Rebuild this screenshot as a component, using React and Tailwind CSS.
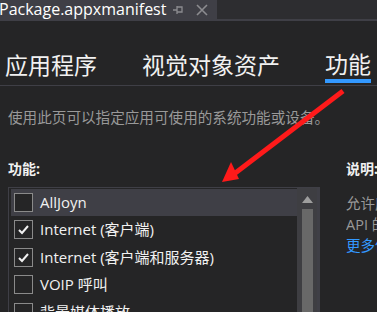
const items = [
  { label: "AllJoyn", checked: false, hover: true },
  { label: "Internet (客户端)", checked: true },
  { label: "Internet (客户端和服务器)", checked: true },
  { label: "VOIP 呼叫", checked: false },
  { label: "背景媒体播放", checked: false },
];

const font = { fontFamily: '"Open Sans", "Noto Sans CJK SC", sans-serif' };

function Check({ checked }) {
  return (
    <div className="w-[19px] h-[19px] shrink-0 border border-[#8a8a8a] bg-[#252526] flex items-center justify-center">
      {checked && (
        <svg width="13" height="13" viewBox="0 0 13 13">
          <path d="M2 7 L5 10 L11 3" fill="none" stroke="#f1f1f1" strokeWidth="2" />
        </svg>
      )}
    </div>
  );
}

export default function App() {
  return (
    <div className="w-[377px] h-[312px] overflow-hidden bg-[#252526] relative text-[#f1f1f1]" style={font}>
      {/* document tab strip */}
      <div className="h-[21px] flex bg-[#2d2d30] border-b-2 border-[#3f3f46]">
        <div className="w-[217px] bg-[#3f3f46] flex items-center">
          <span className="text-[16px] leading-none -ml-[1px] -mt-[2px] text-white">Package.appxmanifest</span>
          <svg className="ml-auto" width="12" height="10" viewBox="0 0 12 10">
            <path d="M1 5 H5 M5 1 V9 M5 2 H10 V7 H5" fill="none" stroke="#8c8c90" strokeWidth="1.3" />
          </svg>
          <svg className="ml-[12px] mr-[9px]" width="12" height="12" viewBox="0 0 12 12">
            <path d="M1 1 L11 11 M11 1 L1 11" stroke="#8c8c90" strokeWidth="1.6" />
          </svg>
        </div>
      </div>

      {/* main tabs */}
      <div className="flex items-end h-[65px] border-b border-[#3f3f46] pl-[5px]">
        <div className="text-[23px] leading-none pb-[8px]">应用程序</div>
        <div className="text-[23px] leading-none pb-[8px] ml-[45px]">视觉对象资产</div>
        <div className="ml-[45px] flex flex-col">
          <div className="text-[23px] leading-none pb-[3px]">功能</div>
          <div className="h-[4px] w-[46px] bg-[#3399ff] mb-[2px]" />
        </div>
      </div>

      <div className="pl-[8px] pt-[24px] text-[14.6px] leading-none text-[#999999]">
        使用此页可以指定应用可使用的系统功能或设备。
      </div>

      <div className="flex pt-[37px]">
        <div className="pl-[8px] w-[346px]">
          <div className="text-[14px] font-bold leading-none">功能:</div>
          <div className="mt-[11px] w-[312px] h-[200px] border border-[#3f3f46] border-r-[3px] flex">
            <div className="flex-1 pt-[1px] pl-[2px]">
              {items.map((it) => (
                <div
                  key={it.label}
                  className={`h-[27.5px] flex items-center pl-[3px] gap-[7px] ${it.hover ? "bg-[#3f3f46]" : ""}`}
                >
                  <Check checked={it.checked} />
                  <span className="text-[15px] leading-none whitespace-nowrap">{it.label}</span>
                </div>
              ))}
            </div>
            <div className="w-[20px] bg-[#3e3e42] flex flex-col items-center pt-[8px]">
              <svg width="11" height="7" viewBox="0 0 11 7">
                <path d="M5.5 0 L11 7 H0 Z" fill="#9e9e9e" />
              </svg>
              <div className="w-[11px] flex-1 mt-[6px] bg-[#686868]" />
            </div>
          </div>
        </div>
        <div className="flex-1 min-w-0 whitespace-nowrap overflow-hidden">
          <div className="text-[14px] font-bold leading-none">说明:</div>
          <div className="mt-[17px] text-[14.5px] leading-[22px] text-[#999999]">允许应用</div>
          <div className="text-[14.5px] leading-[20px] text-[#999999]">API 的</div>
          <div className="mt-[4px] text-[14.5px] leading-none text-[#3399ff]">更多信息</div>
        </div>
      </div>

      {/* red annotation arrow */}
      <svg className="absolute left-0 top-0 pointer-events-none" width="377" height="312">
        <line x1="343" y1="91" x2="234" y2="174" stroke="#ff1a1a" strokeWidth="5" />
        <path d="M222 182 L231 162 L239 179 Z" fill="#ff1a1a" />
      </svg>
    </div>
  );
}
